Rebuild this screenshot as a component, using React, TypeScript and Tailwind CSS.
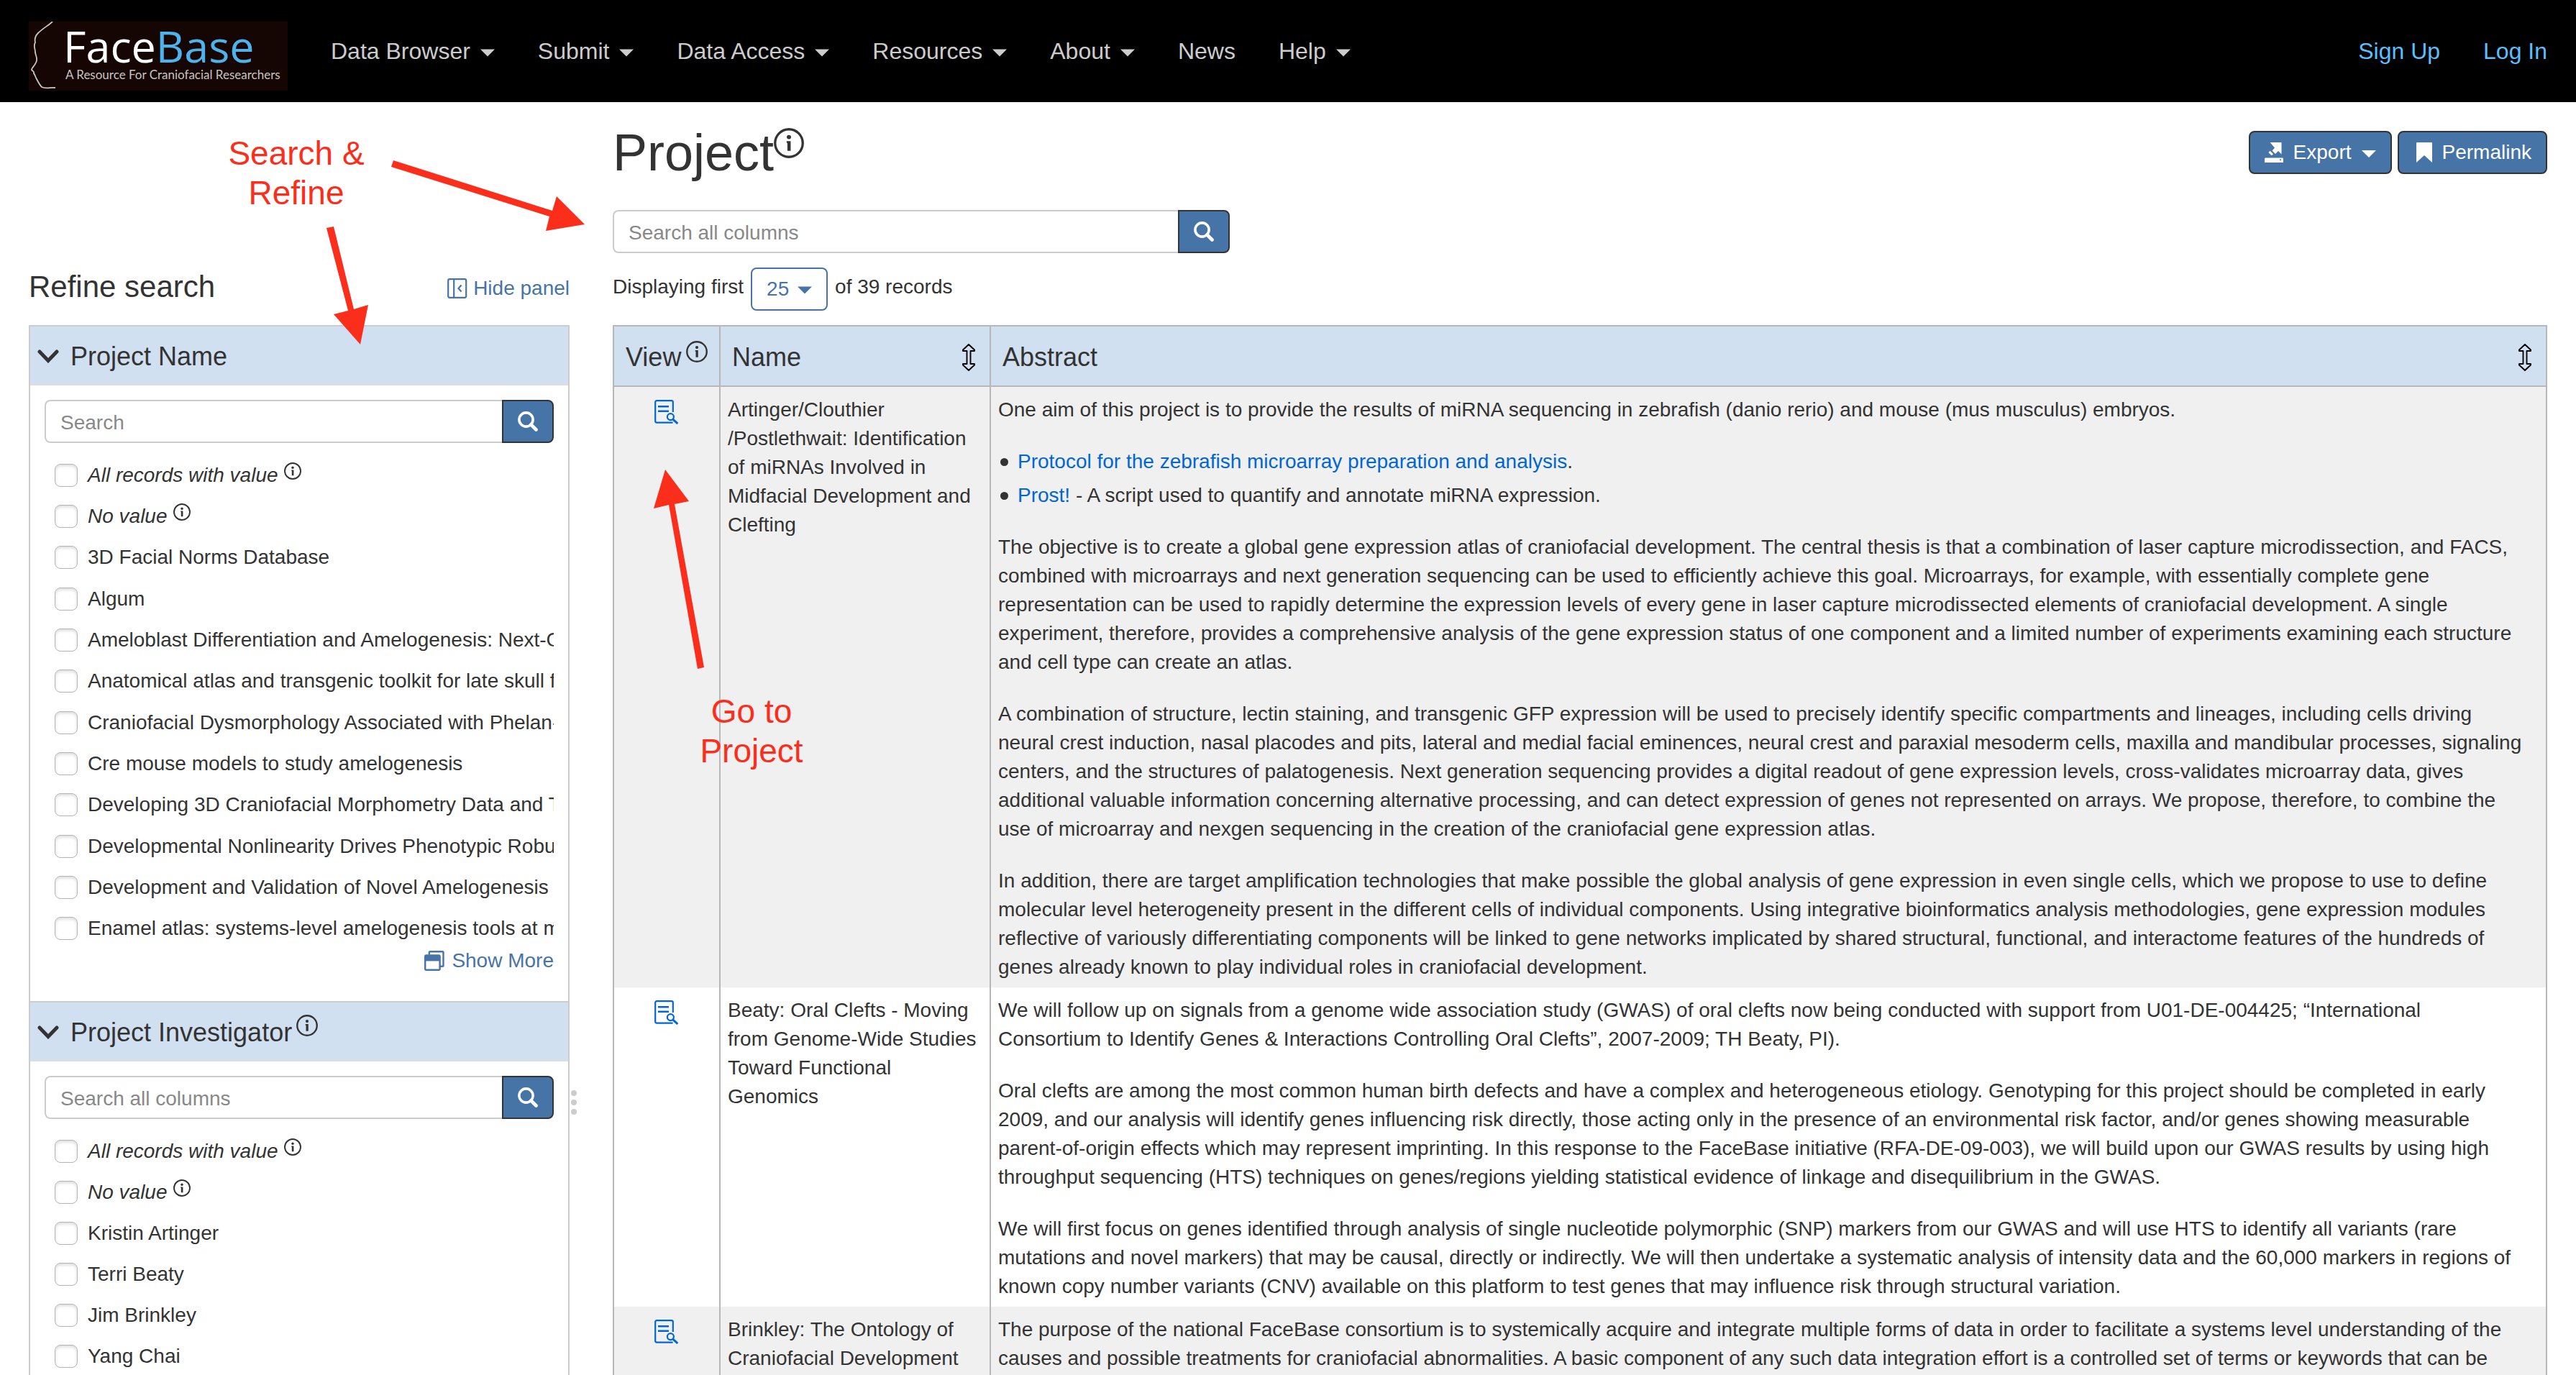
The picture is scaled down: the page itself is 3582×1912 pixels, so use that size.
import React from 'react';

const NAV = [
  { label: 'Data Browser', menu: true },
  { label: 'Submit', menu: true },
  { label: 'Data Access', menu: true },
  { label: 'Resources', menu: true },
  { label: 'About', menu: true },
  { label: 'News', menu: false },
  { label: 'Help', menu: true },
];

const PROJECTS = [
  '3D Facial Norms Database',
  'Algum',
  'Ameloblast Differentiation and Amelogenesis: Next-Generation Models',
  'Anatomical atlas and transgenic toolkit for late skull formation',
  'Craniofacial Dysmorphology Associated with Phelan-McDermid Syndrome',
  'Cre mouse models to study amelogenesis',
  'Developing 3D Craniofacial Morphometry Data and Tools',
  'Developmental Nonlinearity Drives Phenotypic Robustness',
  'Development and Validation of Novel Amelogenesis Models',
  'Enamel atlas: systems-level amelogenesis tools at multiple scales',
];

const INVESTIGATORS = ['Kristin Artinger', 'Terri Beaty', 'Jim Brinkley', 'Yang Chai'];

function InfoIcon({ className }: { className: string }) {
  return (
    <svg viewBox="0 0 24 24" className={className} aria-hidden="true">
      <circle cx="12" cy="12" r="11" fill="none" stroke="currentColor" strokeWidth="1.9" />
      <circle cx="12" cy="7.2" r="1.7" fill="currentColor" />
      <path d="M10.2 10.4h3.2v7.8h-2.6v-6.4h-.6z" fill="currentColor" />
    </svg>
  );
}

function Caret({ className }: { className: string }) {
  return (
    <svg viewBox="0 0 20 10" className={className} aria-hidden="true">
      <path d="M0 0h20L10 10z" fill="currentColor" />
    </svg>
  );
}

function SearchIcon() {
  return (
    <svg viewBox="0 0 28 28" className="size-7" aria-hidden="true">
      <circle cx="11.5" cy="11.5" r="9.6" fill="none" stroke="currentColor" strokeWidth="3.6" />
      <path d="M18.5 18.5L25.5 25.5" stroke="currentColor" strokeWidth="4.6" strokeLinecap="round" />
    </svg>
  );
}

function SortIcon() {
  return (
    <svg viewBox="0 0 18 38" className="h-[38px] w-[18px]" aria-hidden="true">
      <path
        d="M9 1L17 8.5V10H11.5V28H17V29.5L9 37L1 29.5V28H6.5V10H1V8.5Z"
        fill="none"
        stroke="#000"
        strokeWidth="1.9"
        strokeLinejoin="round"
      />
    </svg>
  );
}

function RecordIcon() {
  return (
    <svg viewBox="0 0 34 34" className="size-[34px]" fill="none" stroke="#0066d6" aria-hidden="true">
      <path d="M25.8 17V3.2A2 2 0 0 0 23.8 1.2H3.2A2 2 0 0 0 1.2 3.2V29.6A2 2 0 0 0 3.2 31.6H25.6" strokeWidth="2.2" />
      <path d="M5 9.3H20M5 15.8H20" strokeWidth="2.4" />
      <circle cx="22.4" cy="23.6" r="4.5" strokeWidth="2.2" />
      <path d="M25.6 26.8L32.3 33" strokeWidth="3" />
    </svg>
  );
}

function FaceBaseLogo() {
  return (
    <a
      href="#home"
      className="relative mb-4 flex h-24 w-[360px] flex-col self-end bg-[#150603] pl-12 font-['Open_Sans',sans-serif]"
    >
      <svg viewBox="0 0 360 96" className="absolute inset-0 size-full" fill="none" aria-hidden="true">
        <path
          d="M33 0C28 5 20 9 13 16C8 21 8 25 9 29C6 34 9 37 9 43C10 49 13 52 10 57C8 62 4 64 4 67C5 69 8 69 7 72C9 74 9 77 11 80C13 84 15 88 18 91C24 94 30 91 37 92"
          stroke="#c9c4c2"
          strokeWidth="1.8"
        />
      </svg>
      <span className="mt-1 text-[61px] leading-[60px] font-medium text-white">
        Face<span className="text-[#4db3ec]">Base</span>
      </span>
      <span className="pl-[3px] font-['Lato',sans-serif] text-[17px] leading-5 whitespace-nowrap text-[#c9c4c2]">
        A Resource For Craniofacial Researchers
      </span>
    </a>
  );
}

function SearchBox({ id, placeholder, className }: { id: string; placeholder: string; className: string }) {
  return (
    <form className={className} onSubmit={(e) => e.preventDefault()}>
      <input
        id={id}
        type="text"
        aria-label={placeholder}
        placeholder={placeholder}
        className="h-[60px] min-w-0 flex-1 rounded-l-lg border-2 border-r-0 border-[#ccc] bg-white px-5 pt-[3px] outline-none placeholder:text-[#888]"
      />
      <button
        type="submit"
        aria-label="Search"
        className="flex h-[60px] w-[72px] shrink-0 items-center justify-center rounded-r-lg border-2 border-[#333] bg-[#4674a7] text-white"
      >
        <SearchIcon />
      </button>
    </form>
  );
}

function Option({ label, special }: { label: string; special?: boolean }) {
  return (
    <li className="flex h-[57px] items-center overflow-hidden">
      <label className="flex min-w-0 items-center gap-[14px] whitespace-nowrap">
        <input
          type="checkbox"
          className="size-8 shrink-0 appearance-none rounded-lg border border-[#b5b5b5] bg-white shadow-[inset_0_2px_4px_#d8d8d8]"
        />
        <span className={special ? 'italic' : ''}>{label}</span>
        {special && <InfoIcon className="mb-3 -ml-[6px] size-6 shrink-0" />}
      </label>
    </li>
  );
}

function Facet({
  id,
  title,
  info,
  placeholder,
  options,
  listClass,
  children,
}: {
  id: string;
  title: string;
  info?: boolean;
  placeholder: string;
  options: string[];
  listClass: string;
  children?: React.ReactNode;
}) {
  return (
    <section className="border-x-2 border-t-2 border-[#ccc]">
      <h3 className="border-b-2 border-[#ddd] bg-[#d1e0f0]">
        <button type="button" className="flex h-20 w-full items-center pt-[3px] pl-[10px] text-4xl">
          <svg viewBox="0 0 30 19" className="mr-4 h-[19px] w-[30px]" aria-hidden="true">
            <path d="M3 3L15 15.5L27 3" fill="none" stroke="currentColor" strokeWidth="5" strokeLinecap="round" />
          </svg>
          {title}
          {info && <InfoIcon className="mb-5 ml-[6px] size-[30px]" />}
        </button>
      </h3>
      <div className="px-5 pt-5">
        <SearchBox id={id} placeholder={placeholder} className="flex" />
        <ul className={listClass}>
          <Option label="All records with value" special />
          <Option label="No value" special />
          {options.map((o) => (
            <Option key={o} label={o} />
          ))}
        </ul>
        {children}
      </div>
    </section>
  );
}

function Sidebar() {
  return (
    <aside className="flex w-[752px] shrink-0 flex-col pt-[230px]">
      <div className="mb-[26px] flex h-[54px] items-center justify-between">
        <h2 className="text-[42px] leading-[54px]">Refine search</h2>
        <button type="button" className="flex items-center gap-2 pt-[3px] text-[#4674a7]">
          <svg viewBox="0 0 28 28" className="size-7" fill="none" stroke="currentColor" aria-hidden="true">
            <rect x="1.2" y="1.2" width="25" height="25.6" rx="2" strokeWidth="2.2" />
            <path d="M9.2 1V27" strokeWidth="2.2" />
            <path d="M19.5 9.5L15.5 14L19.5 18.5" strokeWidth="2.2" />
          </svg>
          Hide panel
        </button>
      </div>
      <Facet
        id="facet-name"
        title="Project Name"
        placeholder="Search"
        options={PROJECTS}
        listClass="mt-4 flex min-h-[688px] flex-col justify-between pl-[14px]"
      >
        <div className="flex justify-end pb-9">
          <button type="button" className="-mt-1 flex items-center gap-[10px] leading-10 text-[#4674a7]">
            <svg viewBox="0 0 28 28" className="size-7" aria-hidden="true">
              <path
                d="M6.8 5.5V2.5A1.3 1.3 0 0 1 8.1 1.2H25.2A1.3 1.3 0 0 1 26.5 2.5V20.4A1.3 1.3 0 0 1 25.2 21.7H22"
                fill="none"
                stroke="currentColor"
                strokeWidth="2.4"
              />
              <rect x="1.2" y="6.4" width="20.4" height="20.4" rx="1.5" fill="none" stroke="currentColor" strokeWidth="2.4" />
              <path d="M1 6h21v8.4H1z" fill="currentColor" />
            </svg>
            Show More
          </button>
        </div>
      </Facet>
      <Facet
        id="facet-investigator"
        title="Project Investigator"
        info
        placeholder="Search all columns"
        options={INVESTIGATORS}
        listClass="mt-4 flex flex-col pl-[14px]"
      />
    </aside>
  );
}

function Row({ name, children }: { name: React.ReactNode; children: React.ReactNode }) {
  return (
    <tr className="align-top odd:bg-[#f0f0f0]">
      <td className="border-x-2 border-[#b7b7b7] pt-[18px]">
        <a href="#record" aria-label="View record" className="flex justify-center">
          <RecordIcon />
        </a>
      </td>
      <td className="border-x-2 border-[#b7b7b7] px-[10px] pt-3 pb-2">{name}</td>
      <td className="border-x-2 border-[#b7b7b7] pt-3 pr-[26px] pb-2 pl-[10px]">
        <div className="flex flex-col gap-8">{children}</div>
      </td>
    </tr>
  );
}

function Bullet({ children }: { children: React.ReactNode }) {
  return (
    <li className="flex items-center gap-[13px] pl-[3px]">
      <span className="size-[11px] shrink-0 rounded-full bg-[#333]" />
      <span>{children}</span>
    </li>
  );
}

function ProjectTable() {
  return (
    <table className="mt-5 w-full table-fixed border-collapse leading-10">
      <colgroup>
        <col className="w-[148px]" />
        <col className="w-[376px]" />
        <col />
      </colgroup>
      <thead>
        <tr className="bg-[#d1e0f0] text-left text-4xl">
          <th className="h-[84px] border-2 border-[#b7b7b7] pt-[3px] pl-4 font-normal">
            <span className="flex items-center gap-[7px]">
              View
              <InfoIcon className="mb-4 size-[30px] shrink-0" />
            </span>
          </th>
          <th className="border-2 border-[#b7b7b7] pt-[3px] pr-5 pl-4 font-normal">
            <button type="button" className="flex w-full items-center justify-between">
              Name
              <SortIcon />
            </button>
          </th>
          <th className="border-2 border-[#b7b7b7] pt-[3px] pr-5 pl-4 font-normal">
            <button type="button" className="flex w-full items-center justify-between">
              Abstract
              <SortIcon />
            </button>
          </th>
        </tr>
      </thead>
      <tbody>
        <Row
          name={
            <>
              Artinger/Clouthier
              <wbr />
              /Postlethwait: Identification of miRNAs Involved in Midfacial Development and Clefting
            </>
          }
        >
          <p>
            One aim of this project is to provide the results of miRNA sequencing in zebrafish (danio rerio) and mouse
            (mus musculus) embryos.
          </p>
          <ul className="flex flex-col gap-[7px]">
            <Bullet>
              <a href="#protocol" className="text-[#0066d6]">
                Protocol for the zebrafish microarray preparation and analysis
              </a>
              .
            </Bullet>
            <Bullet>
              <a href="#prost" className="text-[#0066d6]">
                Prost!
              </a>{' '}
              - A script used to quantify and annotate miRNA expression.
            </Bullet>
          </ul>
          <p>
            The objective is to create a global gene expression atlas of craniofacial development. The central thesis is
            that a combination of laser capture microdissection, and FACS, combined with microarrays and next generation
            sequencing can be used to efficiently achieve this goal. Microarrays, for example, with essentially complete
            gene representation can be used to rapidly determine the expression levels of every gene in laser capture
            microdissected elements of craniofacial development. A single experiment, therefore, provides a
            comprehensive analysis of the gene expression status of one component and a limited number of experiments
            examining each structure and cell type can create an atlas.
          </p>
          <p>
            A combination of structure, lectin staining, and transgenic GFP expression will be used to precisely
            identify specific compartments and lineages, including cells driving neural crest induction, nasal placodes
            and pits, lateral and medial facial eminences, neural crest and paraxial mesoderm cells, maxilla and
            mandibular processes, signaling centers, and the structures of palatogenesis. Next generation sequencing
            provides a digital readout of gene expression levels, cross-validates microarray data, gives additional
            valuable information concerning alternative processing, and can detect expression of genes not represented
            on arrays. We propose, therefore, to combine the use of microarray and nexgen sequencing in the creation of
            the craniofacial gene expression atlas.
          </p>
          <p>
            In addition, there are target amplification technologies that make possible the global analysis of gene
            expression in even single cells, which we propose to use to define molecular level heterogeneity present in
            the different cells of individual components. Using integrative bioinformatics analysis methodologies, gene
            expression modules reflective of variously differentiating components will be linked to gene networks
            implicated by shared structural, functional, and interactome features of the hundreds of genes already known
            to play individual roles in craniofacial development.
          </p>
        </Row>
        <Row name="Beaty: Oral Clefts - Moving from Genome-Wide Studies Toward Functional Genomics">
          <p>
            We will follow up on signals from a genome wide association study (GWAS) of oral clefts now being conducted
            with support from U01-DE-004425; “International Consortium to Identify Genes &amp; Interactions Controlling
            Oral Clefts”, 2007-2009; TH Beaty, PI).
          </p>
          <p>
            Oral clefts are among the most common human birth defects and have a complex and heterogeneous etiology.
            Genotyping for this project should be completed in early 2009, and our analysis will identify genes
            influencing risk directly, those acting only in the presence of an environmental risk factor, and/or genes
            showing measurable parent-of-origin effects which may represent imprinting. In this response to the FaceBase
            initiative (RFA-DE-09-003), we will build upon our GWAS results by using high throughput sequencing (HTS)
            techniques on genes/regions yielding statistical evidence of linkage and disequilibrium in the GWAS.
          </p>
          <p>
            We will first focus on genes identified through analysis of single nucleotide polymorphic (SNP) markers from
            our GWAS and will use HTS to identify all variants (rare mutations and novel markers) that may be causal,
            directly or indirectly. We will then undertake a systematic analysis of intensity data and the 60,000
            markers in regions of known copy number variants (CNV) available on this platform to test genes that may
            influence risk through structural variation.
          </p>
        </Row>
        <Row name="Brinkley: The Ontology of Craniofacial Development">
          <p>
            The purpose of the national FaceBase consortium is to systemically acquire and integrate multiple forms of
            data in order to facilitate a systems level understanding of the causes and possible treatments for
            craniofacial abnormalities. A basic component of any such data integration effort is a controlled set of
            terms or keywords that can be
          </p>
        </Row>
      </tbody>
    </table>
  );
}

function Annotations() {
  return (
    <div className="pointer-events-none absolute inset-0 text-center text-[46px] leading-[55px] text-[#fb2d1b]">
      <p className="absolute top-[186px] left-[302px] w-[220px]">
        Search &amp;
        <br />
        Refine
      </p>
      <p className="absolute top-[962px] left-[945px] w-[200px]">
        Go to
        <br />
        Project
      </p>
      <svg
        width="1200"
        height="960"
        viewBox="0 0 1200 960"
        className="absolute top-0 left-0"
        fill="currentColor"
        aria-hidden="true"
      >
        <path d="M547 223L768 293L774 273L813 312L759 321L764 301L544 232Z" />
        <path d="M454 317L464 315L492 430L512 424L501 479L464 437L484 432Z" />
        <path d="M970 930L979 928L938 701L958 697L925 653L909 707L930 702Z" />
      </svg>
    </div>
  );
}

export default function App() {
  return (
    <div className="relative h-screen overflow-hidden bg-white font-['Liberation_Sans',Arial,sans-serif] text-[28px] leading-10 text-[#333]">
      <header className="flex h-[142px] items-center bg-black px-10 text-[32px] text-[#ccc]">
        <FaceBaseLogo />
        <nav className="ml-[60px] flex items-center gap-[60px]">
          {NAV.map((item) =>
            item.menu ? (
              <button key={item.label} type="button" className="flex items-center gap-[14px]">
                {item.label}
                <Caret className="mt-1 h-[11px] w-5" />
              </button>
            ) : (
              <a key={item.label} href="#news">
                {item.label}
              </a>
            ),
          )}
        </nav>
        <div className="ml-auto flex gap-[60px] text-[#59bfff]">
          <a href="#signup">Sign Up</a>
          <a href="#login">Log In</a>
        </div>
      </header>

      <div className="flex px-10">
        <Sidebar />
        <div className="flex w-[60px] shrink-0 flex-col gap-[5px] pt-[1374px] pl-[2px]" role="separator">
          <span className="size-2 rounded-full bg-[#ccc]" />
          <span className="size-2 rounded-full bg-[#ccc]" />
          <span className="size-2 rounded-full bg-[#ccc]" />
        </div>
        <main className="min-w-0 flex-1 pt-10">
          <div className="flex items-center gap-2">
            <h1 className="mr-auto flex text-7xl leading-[60px]">
              Project
              <InfoIcon className="-mt-1 size-[42px]" />
            </h1>
            <button
              type="button"
              className="flex h-[60px] items-center rounded-lg border-2 border-[#333] bg-[#4674a7] px-5 text-white"
            >
              <svg viewBox="0 0 26 28" className="mr-[14px] h-7 w-[26px]" fill="currentColor" aria-hidden="true">
                <path d="M7.5 0H23.5V16.5L19 12L15 16L10.5 11.5L14 7.5Z" />
                <path d="M5.3 14L7.7 11.8L12 16.3L9.7 18.2Z" />
                <path fillRule="evenodd" d="M1 21.5H25L26 22.5V28H0V22.5ZM21 23.5V25H23V23.5Z" />
              </svg>
              Export
              <Caret className="mt-1 ml-[14px] h-[10px] w-5" />
            </button>
            <button
              type="button"
              className="flex h-[60px] items-center rounded-lg border-2 border-[#333] bg-[#4674a7] pr-5 pl-6 text-white"
            >
              <svg viewBox="0 0 22 28" className="mr-[14px] h-7 w-[22px]" fill="currentColor" aria-hidden="true">
                <path d="M1 0H21A1 1 0 0 1 22 1V28L11 18L0 28V1A1 1 0 0 1 1 0Z" />
              </svg>
              Permalink
            </button>
          </div>
          <SearchBox id="main-search" placeholder="Search all columns" className="mt-[50px] flex w-[858px] max-w-full" />
          <div className="mt-5 flex items-start gap-[10px] leading-[54px]">
            <label htmlFor="page-size">Displaying first</label>
            <span className="relative flex text-[#4674a7]">
              <select
                id="page-size"
                defaultValue="25"
                className="h-[60px] w-[107px] appearance-none rounded-lg border-2 border-[#4674a7] bg-white pl-5 leading-10"
              >
                <option>10</option>
                <option>25</option>
                <option>50</option>
              </select>
              <Caret className="pointer-events-none absolute top-[26px] right-[22px] h-[11px] w-5" />
            </span>
            <span>of 39 records</span>
          </div>
          <ProjectTable />
        </main>
      </div>

      <Annotations />
    </div>
  );
}
